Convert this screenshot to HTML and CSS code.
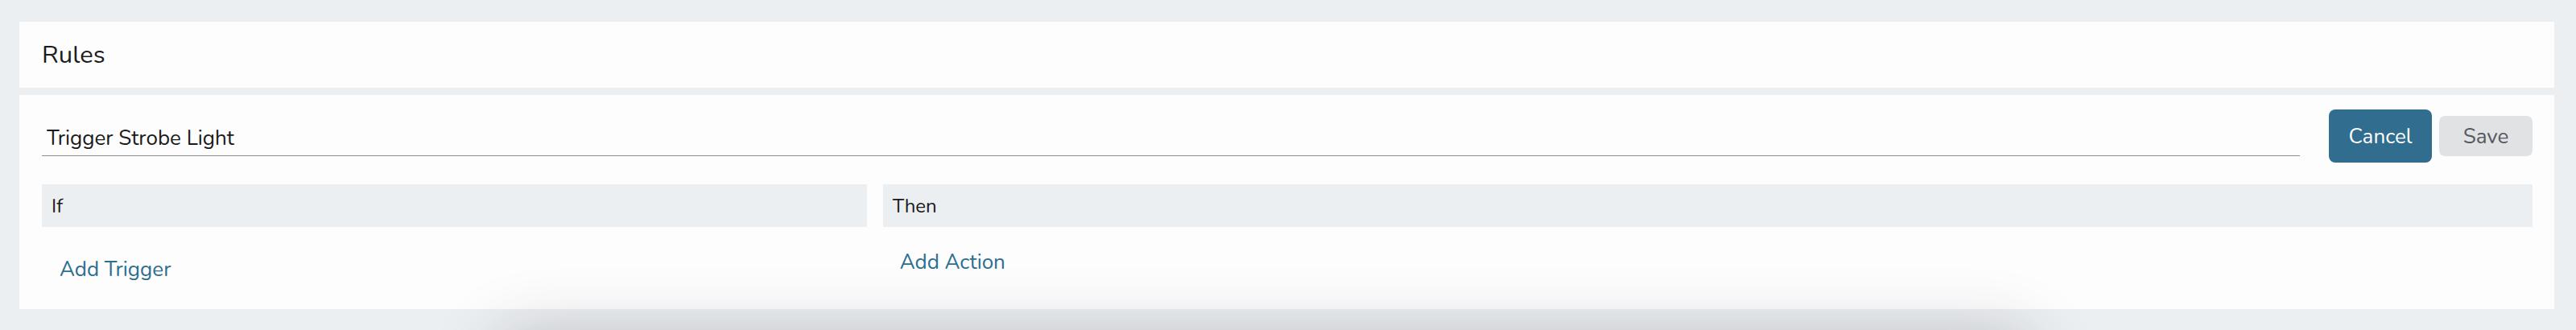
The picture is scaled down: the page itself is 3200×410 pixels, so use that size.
FILE: index.html
```html
<!DOCTYPE html>
<html lang="en">
<head>
<meta charset="utf-8">
<title>Rules</title>
<link rel="stylesheet" href="styles.css">
</head>
<body>
<div class="page">
  <header class="card title-card">
    <h1 class="title">Rules</h1>
  </header>
  <main class="card rule-card">
    <div class="rule-top">
      <input class="rule-name" type="text" value="Trigger Strobe Light">
      <button class="btn btn-primary" type="button">Cancel</button>
      <button class="btn btn-muted" type="button">Save</button>
    </div>
    <div class="rule-grid">
      <section class="rule-col">
        <div class="col-head">If</div>
        <a class="add-link add-trigger" href="#">Add Trigger</a>
      </section>
      <section class="rule-col">
        <div class="col-head">Then</div>
        <a class="add-link add-action" href="#">Add Action</a>
      </section>
    </div>
  </main>
</div>
<div class="overlay-shadow"></div>
</body>
</html>
```
FILE: styles.css
```css
html, body {
  margin: 0;
  padding: 0;
  background: #eceff1;
  overflow: hidden;
}
body {
  font-family: "Nunito", "Lato", "Open Sans", sans-serif;
  color: #1b1b1b;
}
.page {
  padding: 27px 27px 0 24px;
  display: flex;
  flex-direction: column;
  gap: 9px;
}
.card {
  background: #fdfdfe;
}
.title-card {
  height: 82px;
  padding: 0 28px;
  display: flex;
  align-items: center;
}
.title {
  margin: 0;
  font-size: 31px;
  font-weight: 400;
  color: #1c1c1c;
}
.rule-card {
  height: 266px;
  box-sizing: border-box;
  padding: 18px 27px 0 28px;
}
.rule-top {
  display: flex;
  align-items: center;
  height: 66px;
}
.rule-name {
  flex: 1;
  align-self: flex-end;
  margin: 0 36px 8px 0;
  height: 44px;
  box-sizing: border-box;
  border: 0;
  border-bottom: 1.5px solid #8d8e90;
  background: transparent;
  padding: 0 6px;
  font-family: inherit;
  font-size: 26px;
  color: #1a1a1a;
  outline: none;
}
.btn {
  font-family: inherit;
  font-size: 26px;
  border: 0;
  padding: 0;
  cursor: pointer;
}
.btn-primary {
  width: 128px;
  height: 66px;
  border-radius: 8px;
  background: #306d8f;
  color: #ffffff;
}
.btn-muted {
  width: 116px;
  height: 50px;
  margin-left: 9px;
  border-radius: 7px;
  background: #e0e2e4;
  color: #55595d;
}
.rule-grid {
  margin-top: 27px;
  display: grid;
  grid-template-columns: 1fr 2fr;
  gap: 20px;
}
.rule-col {
  display: flex;
  flex-direction: column;
  align-items: flex-start;
}
.col-head {
  align-self: stretch;
  height: 53px;
  box-sizing: border-box;
  padding-left: 12px;
  display: flex;
  align-items: center;
  background: #eceff1;
  font-size: 24px;
  color: #1a1a1a;
}
.add-link {
  font-size: 26px;
  line-height: 36px;
  color: #2e6e8f;
  text-decoration: none;
}
.add-trigger {
  margin: 35px 0 0 22px;
}
.add-action {
  margin: 26px 0 0 21px;
}
.overlay-shadow {
  position: fixed;
  left: 640px;
  top: 440px;
  width: 1860px;
  height: 300px;
  border-radius: 20px;
  background: #eceff1;
  box-shadow: 0 0 80px 24px rgba(40, 45, 55, 0.25);
}
```
